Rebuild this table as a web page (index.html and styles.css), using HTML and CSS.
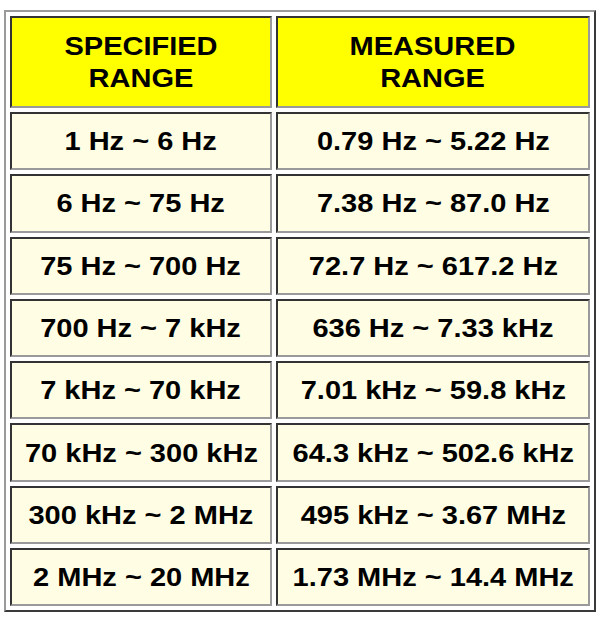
FILE: index.html
```html
<!DOCTYPE html>
<html>
<head>
<meta charset="utf-8">
<link rel="stylesheet" href="styles.css">
</head>
<body>
<table class="ranges">
  <tr class="head">
    <th><span class="t">SPECIFIED<br>RANGE</span></th>
    <th><span class="t">MEASURED<br>RANGE</span></th>
  </tr>
  <tr><td><span class="t">1 Hz ~ 6 Hz</span></td><td><span class="t">0.79 Hz ~ 5.22 Hz</span></td></tr>
  <tr><td><span class="t">6 Hz ~ 75 Hz</span></td><td><span class="t">7.38 Hz ~ 87.0 Hz</span></td></tr>
  <tr><td><span class="t">75 Hz ~ 700 Hz</span></td><td><span class="t">72.7 Hz ~ 617.2 Hz</span></td></tr>
  <tr><td><span class="t">700 Hz ~ 7 kHz</span></td><td><span class="t">636 Hz ~ 7.33 kHz</span></td></tr>
  <tr><td><span class="t">7 kHz ~ 70 kHz</span></td><td><span class="t">7.01 kHz ~ 59.8 kHz</span></td></tr>
  <tr><td><span class="t">70 kHz ~ 300 kHz</span></td><td><span class="t">64.3 kHz ~ 502.6 kHz</span></td></tr>
  <tr><td><span class="t">300 kHz ~ 2 MHz</span></td><td><span class="t">495 kHz ~ 3.67 MHz</span></td></tr>
  <tr><td><span class="t">2 MHz ~ 20 MHz</span></td><td><span class="t">1.73 MHz ~ 14.4 MHz</span></td></tr>
</table>
</body>
</html>
```
FILE: styles.css
```css
html, body {
  margin: 0;
  padding: 0;
  background: #ffffff;
}
.ranges {
  margin: 10px 0 0 4px;
  border-collapse: separate;
  border-spacing: 4px;
  border-style: solid;
  border-width: 2px;
  border-color: #9a9a9a #3a3a3a #3a3a3a #9a9a9a;
  font-family: "Liberation Sans", Arial, sans-serif;
  font-weight: bold;
  font-size: 25px;
  color: #000000;
}
.ranges th, .ranges td {
  box-sizing: border-box;
  padding: 0;
  text-align: center;
  vertical-align: middle;
  border-style: solid;
  border-width: 2px;
  border-color: #333333 #9a9a9a #9a9a9a #333333;
  background: #fffde3;
}
.ranges th:first-child, .ranges td:first-child {
  width: 262px;
}
.ranges th:last-child, .ranges td:last-child {
  width: 314px;
}
.ranges .head th {
  height: 92px;
  background: #ffff00;
  line-height: 32px;
  font-weight: bold;
}
.ranges td {
  height: 58.3px;
  line-height: 28px;
}
.t {
  display: inline-block;
  transform: scaleX(1.16);
  white-space: nowrap;
}
```
